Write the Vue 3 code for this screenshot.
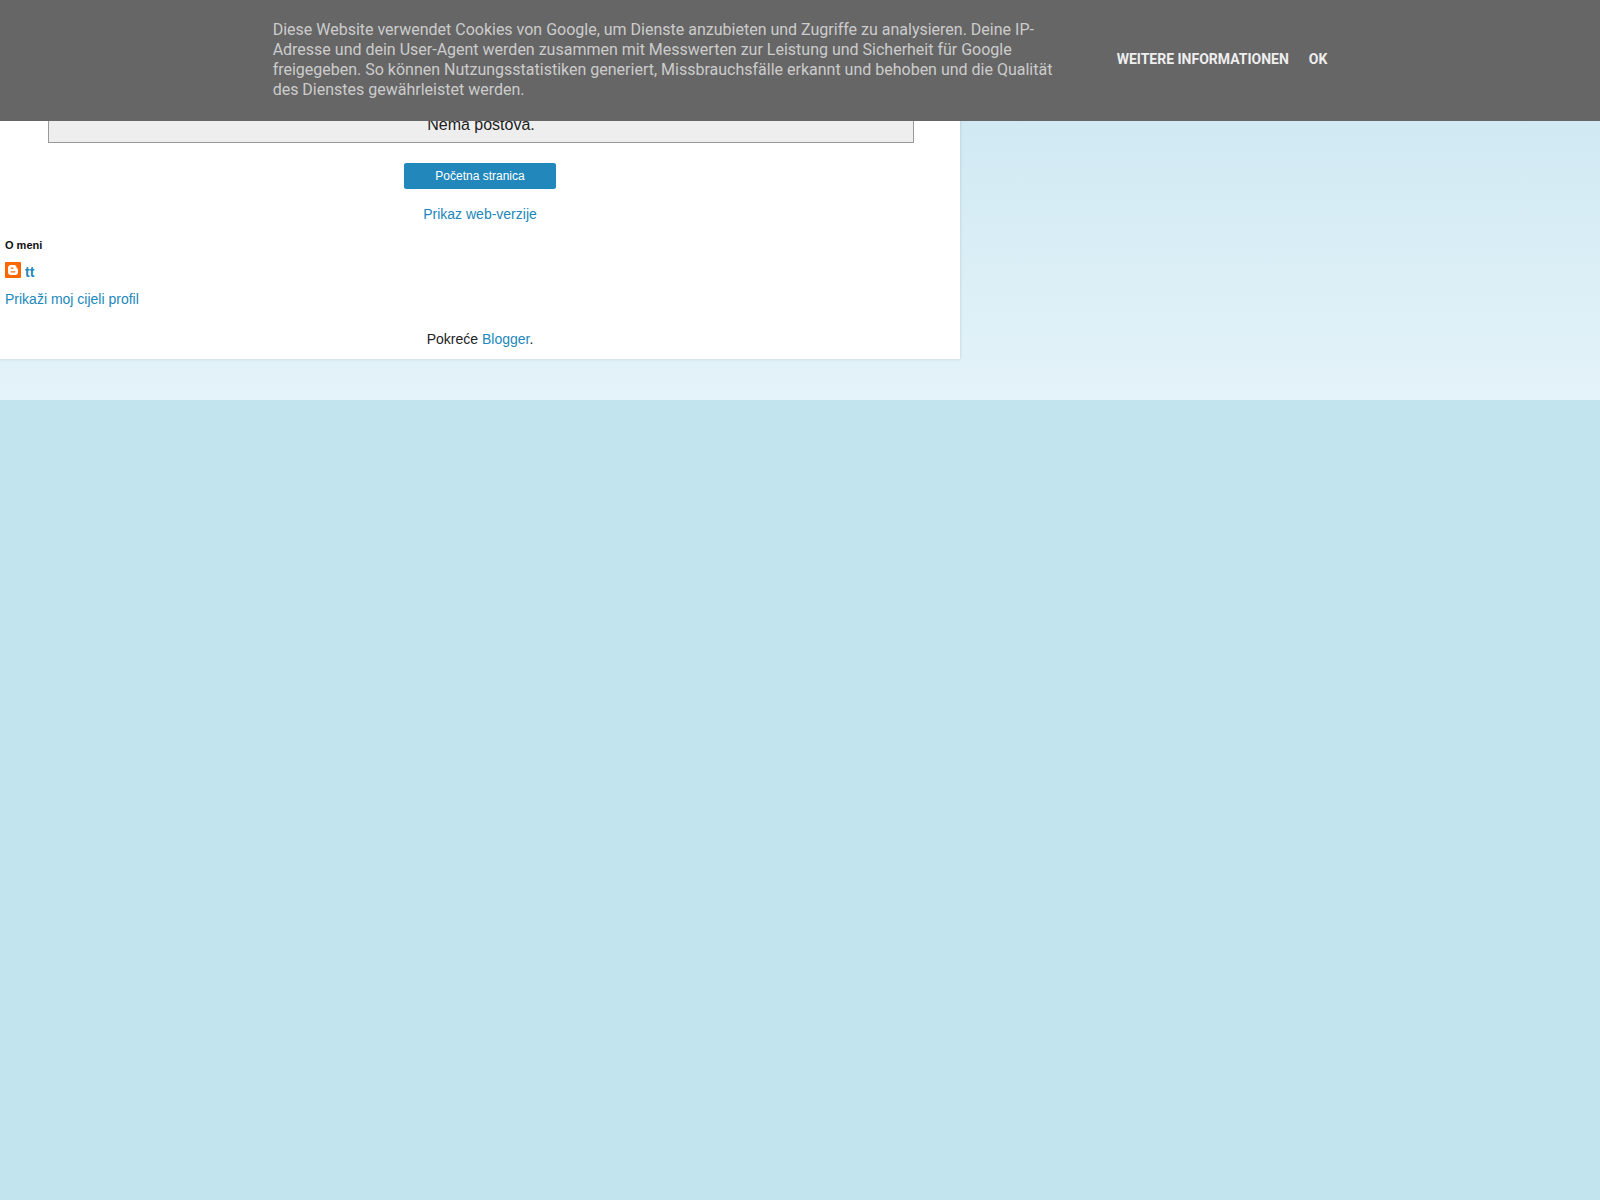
<script setup>
const cookieText =
  'Diese Website verwendet Cookies von Google, um Dienste anzubieten und Zugriffe zu analysieren. Deine IP-Adresse und dein User-Agent werden zusammen mit Messwerten zur Leistung und Sicherheit für Google freigegeben. So können Nutzungsstatistiken generiert, Missbrauchsfälle erkannt und behoben und die Qualität des Dienstes gewährleistet werden.'
</script>

<template>
  <aside class="cookie-bar" aria-label="Cookies">
    <p class="cookie-text">{{ cookieText }}</p>
    <div class="cookie-actions">
      <a href="#">WEITERE INFORMATIONEN</a>
      <a href="#">OK</a>
    </div>
  </aside>

  <div class="page">
    <main class="content">
      <p class="status">Nema postova.</p>
      <a class="home" href="#">Početna stranica</a>
      <a class="web-version" href="#">Prikaz web-verzije</a>

      <section class="profile">
        <h2>O meni</h2>
        <a class="author" href="#">
          <svg width="16" height="16" viewBox="0 0 16 16" aria-hidden="true">
            <rect width="16" height="16" rx="1" fill="#f60" />
            <path
              fill="#fff"
              fill-rule="evenodd"
              d="M6 3h3c1.7 0 2.600 1 2.600 2.400 0 .8.3 1 .8 1 .5 0 .6.3.6.7v2.900a3 3 0 0 1-3 3H6a3 3 0 0 1-3-3V6a3 3 0 0 1 3-3zM6.200 5.500a.6.6 0 0 0 0 1.200h1.800a.6.6 0 0 0 0-1.200zM6.200 9.200a.6.6 0 0 0 0 1.200h3.700a.6.6 0 0 0 0-1.200z"
            />
          </svg>
          <span>tt</span>
        </a>
        <a class="full-profile" href="#">Prikaži moj cijeli profil</a>
      </section>

      <footer>Pokreće <a href="#">Blogger</a>.</footer>
    </main>
  </div>
</template>

<style>
body {
  background: #c2e4ef;
}
</style>

<style scoped>
a {
  color: #2288bb;
  text-decoration: none;
}

.cookie-bar {
  position: fixed;
  inset: 0 0 auto;
  z-index: 10;
  box-sizing: border-box;
  display: flex;
  justify-content: center;
  gap: 60px;
  padding: 20px 20px 21px;
  background: #666;
  font-family: Roboto, sans-serif;
}

.cookie-text {
  flex: 0 1 784px;
  margin: 0;
  color: #ccc;
  font-size: 16px;
  line-height: 20px;
}

.cookie-actions {
  display: flex;
  align-items: center;
  gap: 20px;
  padding-bottom: 2px;
  white-space: nowrap;
}

.cookie-actions a {
  color: #eee;
  font-size: 14px;
  font-weight: 700;
  line-height: 20px;
}

.page {
  padding-bottom: 41px;
  background: linear-gradient(#c8e5f1, #e4f3f9);
  font-family: "Liberation Sans", Arial, sans-serif;
  font-size: 14px;
  line-height: 20px;
  color: #222;
}

.content {
  display: flex;
  flex-direction: column;
  align-items: center;
  width: 60%;
  background: #fff;
  box-shadow: 0 0 3px rgba(0, 0, 0, 0.15);
}

.status {
  align-self: flex-start;
  width: 90%;
  margin: 0 0 20px 5%;
  padding: 114px 0 7px;
  border: 1px solid #999;
  background: #eee;
  font-size: 16px;
  text-align: center;
}

.home {
  box-sizing: border-box;
  width: 152px;
  padding: 3px 0;
  border-radius: 2px;
  background: #2288bb;
  color: #fff;
  font-size: 12px;
  text-align: center;
}

.web-version {
  margin-top: 15px;
}

.profile {
  display: flex;
  flex-direction: column;
  align-items: flex-start;
  align-self: stretch;
  padding: 11px 5px 0;
}

.profile h2 {
  margin: 0 0 7px;
  color: #111;
  font-size: 11px;
  line-height: 20px;
}

.author {
  display: flex;
  align-items: flex-start;
  gap: 4px;
  font-weight: 700;
}

.full-profile {
  margin-top: 7px;
}

footer {
  padding: 20px 0 10px;
}
</style>
